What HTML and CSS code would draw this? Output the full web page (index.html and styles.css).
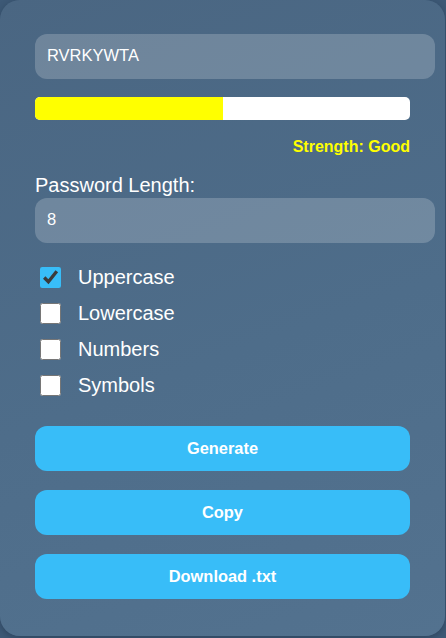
FILE: index.html
```html
<!DOCTYPE html>
<html lang="en">
<head>
<meta charset="utf-8">
<title>Password Generator</title>
<link rel="stylesheet" href="styles.css">
</head>
<body>
<div class="card">
  <input class="field output" type="text" value="RVRKYWTA" readonly>
  <div class="meter"><div class="meter-fill" style="width: 50%"></div></div>
  <div class="strength">Strength: Good</div>
  <label class="len-label" for="len">Password Length:</label>
  <input class="field" id="len" type="text" value="8">
  <div class="options">
    <label class="opt"><input type="checkbox" checked><span>Uppercase</span></label>
    <label class="opt"><input type="checkbox"><span>Lowercase</span></label>
    <label class="opt"><input type="checkbox"><span>Numbers</span></label>
    <label class="opt"><input type="checkbox"><span>Symbols</span></label>
  </div>
  <div class="actions">
    <button class="btn">Generate</button>
    <button class="btn">Copy</button>
    <button class="btn">Download .txt</button>
  </div>
</div>
</body>
</html>
```

FILE: styles.css
```css
* { box-sizing: border-box; }
html, body {
  margin: 0;
  height: 100%;
}
body {
  background: #3d5976;
  font-family: "Liberation Sans", Arial, sans-serif;
  color: #fff;
}
.card {
  width: 445px;
  height: 636px;
  padding: 34px 35px 37px;
  border-radius: 20px;
  background: linear-gradient(160deg, #4a6682 0%, #4e6d8a 55%, #53728f 100%);
  box-shadow: 0 2px 6px rgba(20, 35, 55, 0.35);
  display: flex;
  flex-direction: column;
}
.field {
  display: block;
  width: 400px;
  height: 45px;
  padding: 0 12px 2px;
  border: none;
  border-radius: 12px;
  background: rgba(255, 255, 255, 0.2);
  color: #fff;
  font-family: "Liberation Sans", Arial, sans-serif;
  font-size: 16.5px;
  outline: none;
}
.meter {
  margin-top: 18px;
  height: 23px;
  width: 375px;
  background: #fff;
  border-radius: 5px;
  overflow: hidden;
}
.meter-fill {
  height: 100%;
  background: #ffff00;
}
.strength {
  margin-top: 18px;
  height: 18px;
  line-height: 18px;
  text-align: right;
  color: #ffff00;
  font-weight: bold;
  font-size: 16px;
}
.len-label {
  display: block;
  margin-top: 18px;
  font-size: 20px;
  line-height: 23px;
  margin-bottom: 1px;
}
.options {
  margin-top: 23px;
  display: flex;
  flex-direction: column;
  gap: 13px;
}
.opt {
  display: flex;
  align-items: center;
  gap: 17px;
  height: 23px;
  font-size: 20px;
  padding-left: 5px;
}
.opt input {
  width: 21px;
  height: 21px;
  margin: 0;
  accent-color: #38bdf8;
}
.actions {
  margin-top: 29px;
  display: flex;
  flex-direction: column;
  gap: 19px;
}
.btn {
  display: block;
  width: 375px;
  height: 45px;
  border: none;
  border-radius: 12px;
  background: #38bdf8;
  color: #fff;
  font-family: "Liberation Sans", Arial, sans-serif;
  font-weight: bold;
  font-size: 16.4px;
}
```
